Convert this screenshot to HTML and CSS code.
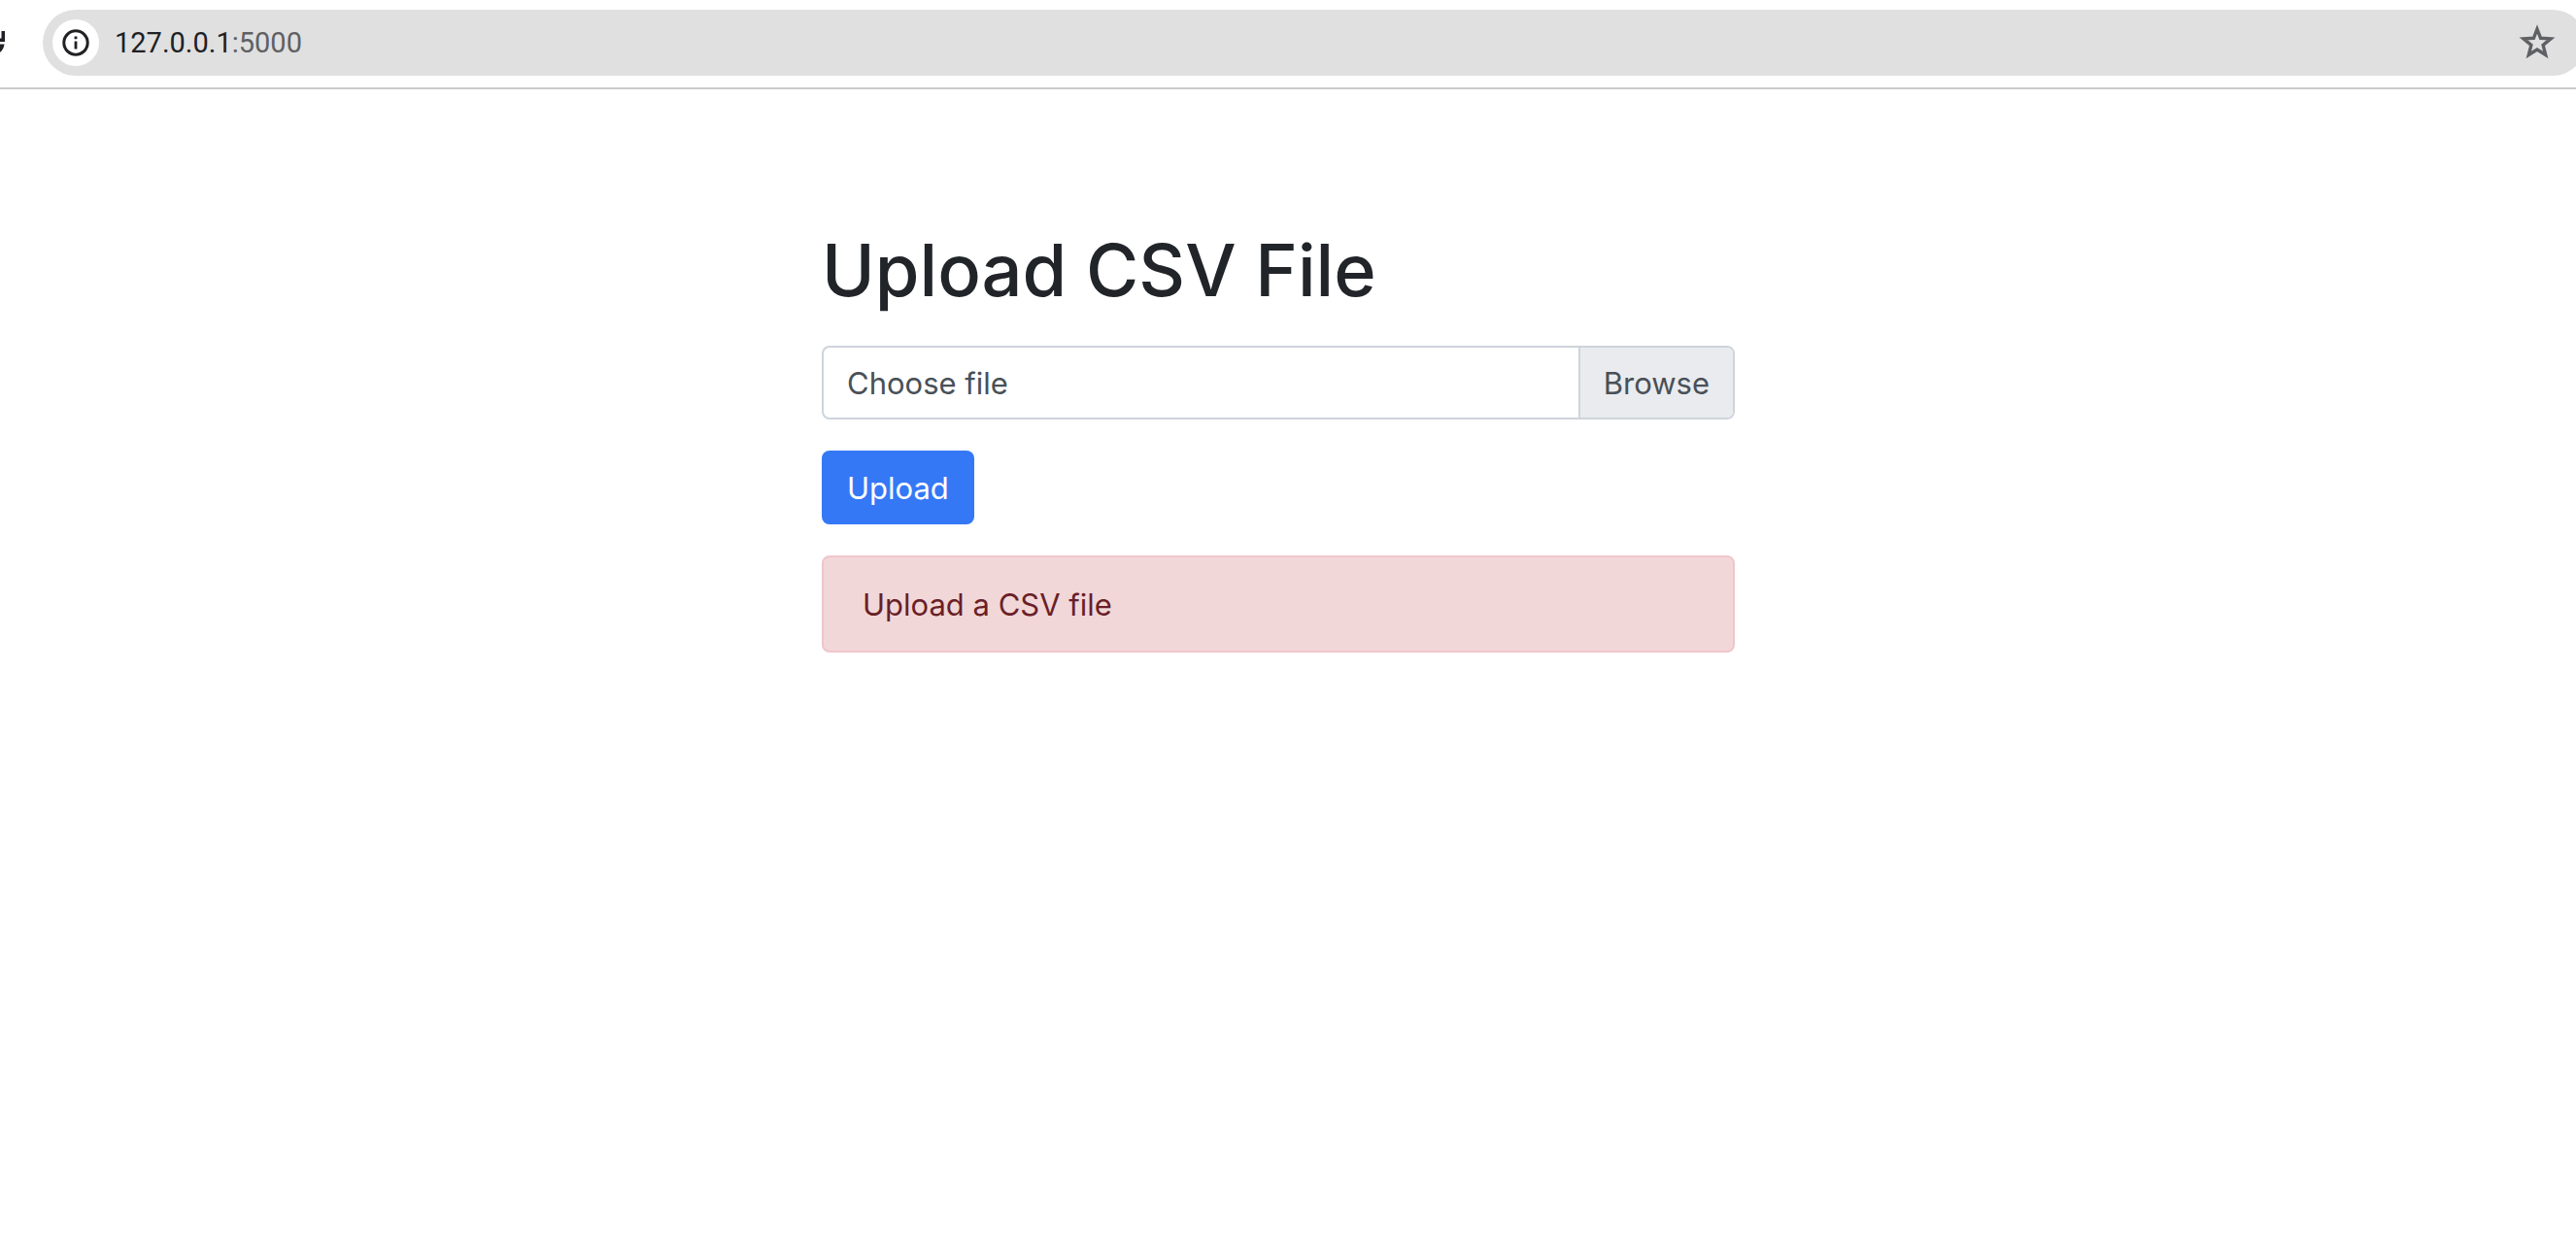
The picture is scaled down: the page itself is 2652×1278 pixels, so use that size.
FILE: index.html
```html
<!DOCTYPE html>
<html lang="en">
<head>
<meta charset="utf-8">
<title>Upload CSV File</title>
<link rel="stylesheet" href="styles.css">
</head>
<body>
<header class="toolbar">
  <button class="reload" type="button" aria-label="Reload">
    <svg viewBox="0 0 6 28" width="6" height="28"><path d="M0 9.500H1.500V2H5V13H0zM0 15.500H4.500Q3.800 21 0 24z" fill="#202124"/></svg>
  </button>
  <div class="address">
    <button class="site-info" type="button" aria-label="Site information">
      <svg viewBox="0 0 28 28" width="28" height="28"><circle cx="14" cy="14" r="12.200" fill="none" stroke="#202124" stroke-width="3"/><path d="M12.600 12.500h2.800v8h-2.800zM12.600 7.500h2.800v2.800h-2.800z" fill="#202124"/></svg>
    </button>
    <div class="url">127.0.0.1<span class="port">:5000</span></div>
    <button class="bookmark" type="button" aria-label="Bookmark this page">
      <svg viewBox="0 0 40 40" width="40" height="40"><path d="M20 6L23.600 15.300 34 15.900 26.100 22.400 28.700 32.500 20 27 11.300 32.500 13.900 22.400 6 15.900 16.400 15.300z" fill="none" stroke="#5f6063" stroke-width="3.400"/></svg>
    </button>
  </div>
</header>
<main class="page">
  <div class="content">
    <h1 class="title">Upload CSV File</h1>
    <form class="form">
      <div class="file-field">
        <input class="file-input" type="file" id="csv" accept=".csv">
        <label class="file-label" for="csv"><span class="file-name">Choose file</span><span class="browse">Browse</span></label>
      </div>
      <button class="submit" type="button">Upload</button>
    </form>
    <div class="alert" role="alert">Upload a CSV file</div>
  </div>
</main>
</body>
</html>
```
FILE: styles.css
```css
* { box-sizing: border-box; }

body {
  margin: 0;
  background: #fff;
  color: #212529;
  font-family: Inter, "Liberation Sans", sans-serif;
  font-size: 31px;
  line-height: 48px;
}

button { font: inherit; border: 0; padding: 0; background: none; }
svg { display: block; }

.toolbar {
  display: flex;
  align-items: center;
  gap: 38px;
  padding: 10px 0 12px;
  border-bottom: 2px solid #c9c9c9;
  overflow: hidden;
}

.address {
  flex: 1;
  display: flex;
  align-items: center;
  height: 68px;
  margin-right: -10px;
  padding: 0 30px 0 10px;
  border-radius: 34px;
  background: #e0e0e0;
}

.site-info {
  display: grid;
  place-items: center;
  width: 48px;
  height: 48px;
  border-radius: 50%;
  background: #fff;
}

.url {
  flex: 1;
  padding-left: 16px;
  color: #202124;
  font-family: Roboto, sans-serif;
  font-size: 29px;
}

.port { color: #5f6063; }

.page { padding: 138px 20px 0 0; }

.content {
  width: 100%;
  max-width: 940px;
  margin: 0 auto;
}

.title {
  margin: 0 0 30px;
  font-size: 74px;
  font-weight: 500;
  line-height: 96px;
}

.form { margin: 0 0 32px; }

.file-field { position: relative; margin-bottom: 32px; }

.file-input {
  position: absolute;
  inset: 0;
  width: 100%;
  opacity: 0;
}

.file-label {
  display: flex;
  height: 76px;
  border: 2px solid #ced4da;
  border-radius: 8px;
  overflow: hidden;
  color: #495057;
}

.file-name { flex: 1; padding: 13px 24px 11px; }

.browse {
  padding: 13px 24px 11px;
  border-left: 2px solid #ced4da;
  background: #e9ebef;
}

.submit {
  display: block;
  height: 76px;
  padding: 2px 26px 0;
  border-radius: 8px;
  background: #3478f6;
  color: #fff;
}

.alert {
  padding: 25px 40px 23px;
  border: 2px solid #efc6cb;
  border-radius: 8px;
  background: #f2d7d9;
  color: #6a1f27;
}
```
